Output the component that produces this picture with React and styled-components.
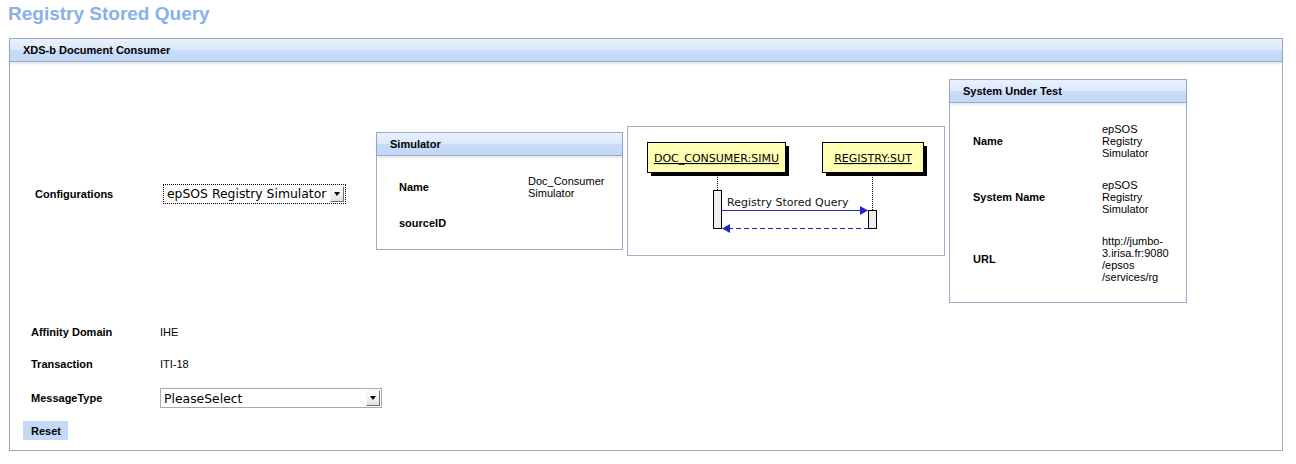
import styled, { createGlobalStyle } from "styled-components";

const GlobalStyle = createGlobalStyle`
  html, body {
    margin: 0;
    padding: 0;
    background: #ffffff;
  }
  body {
    font-family: "Liberation Sans", Arial, Helvetica, sans-serif;
    font-size: 11px;
    color: #000;
  }
`;

const Page = styled.div`
  padding: 0 13px 0 8px;
`;

const Title = styled.h2`
  margin: 3px 0 13px 0;
  font-size: 19px;
  line-height: 22px;
  font-weight: bold;
  color: #88b1ea;
`;

const Panel = styled.div`
  border: 1px solid #9aa9c6;
  background: #fff;
  width: ${(p) => (p.$width ? `${p.$width}px` : "auto")};
  margin-left: ${(p) => (p.$main ? "1px" : "0")};
  box-sizing: border-box;
`;

const PanelHeader = styled.div`
  height: 22px;
  line-height: 22px;
  padding-left: 13px;
  font-weight: bold;
  font-size: 11px;
  border-bottom: 1px solid #9aa9c6;
  background: linear-gradient(
    #e9f1fd 0%,
    #dce8fb 48%,
    #c8dcf8 52%,
    #c2d8f8 100%
  );
  box-shadow: 0 2px 3px rgba(0, 0, 0, 0.1);
  position: relative;
`;

const PanelBody = styled.div`
  padding: ${(p) => p.$pad || "10px 12px"};
`;

const TopRow = styled.div`
  display: grid;
  grid-template-columns: 128px 213px 251px 322px 238px;
  align-items: center;
  margin-left: 12px;
`;

const ConfigCell = styled.div`
  padding-top: 5px;
  font-weight: ${(p) => (p.$bold ? "bold" : "normal")};
`;

const Label = styled.div`
  font-weight: bold;
`;

const FakeSelect = styled.div`
  display: flex;
  align-items: center;
  justify-content: space-between;
  box-sizing: border-box;
  width: ${(p) => p.$width}px;
  height: 20px;
  padding: 0 1px 0 3px;
  border: 1px ${(p) => (p.$focus ? "dotted #000" : "solid #aaaaaa")};
  font-family: "DejaVu Sans", "Liberation Sans", sans-serif;
  font-size: 12.4px;
  background: #fff;
`;

const SelectArrow = styled.span`
  display: flex;
  align-items: center;
  justify-content: center;
  width: 12px;
  height: 14px;
  border: 1px solid;
  border-color: #f4f4f4 #6e6e6e #6e6e6e #f4f4f4;
  background: linear-gradient(#ffffff, #e2e2e2);
  &::after {
    content: "";
    border-left: 3px solid transparent;
    border-right: 3px solid transparent;
    border-top: 4px solid #000;
  }
`;

const InfoTable = styled.div`
  display: grid;
  grid-template-columns: 129px 1fr;
  align-items: center;
`;

const InfoCell = styled.div`
  padding: ${(p) => p.$pad}px 10px;
  line-height: 12px;
  font-weight: ${(p) => (p.$bold ? "bold" : "normal")};
`;

const DiagramBox = styled.div`
  width: 318px;
  height: 130px;
  box-sizing: border-box;
  border: 1px solid #a6b2ca;
  background: #fff;
  svg {
    display: block;
  }
`;

const BottomArea = styled.div`
  margin-top: 13px;
  padding-left: 8px;
`;

const FormRow = styled.div`
  display: grid;
  grid-template-columns: 129px auto;
  align-items: center;
  height: ${(p) => p.$h}px;
`;

const ResetButton = styled.button`
  margin-top: 5px;
  height: 19px;
  width: 45px;
  border: none;
  padding: 0 0 0 8px;
  text-align: left;
  background: #c3d9f7;
  font-family: "Liberation Sans", Arial, sans-serif;
  font-size: 11px;
  font-weight: bold;
  color: #000;
  display: block;
`;

function Lines({ items }) {
  return items.map((l, i) => (
    <span key={i}>
      {l}
      {i < items.length - 1 && <br />}
    </span>
  ));
}

function Select({ value, width, focus }) {
  return (
    <FakeSelect $width={width} $focus={focus}>
      <span>{value}</span>
      <SelectArrow />
    </FakeSelect>
  );
}

function InfoPanel({ title, width, rows, pad, bodyPad }) {
  return (
    <Panel $width={width}>
      <PanelHeader>{title}</PanelHeader>
      <PanelBody $pad={bodyPad}>
        <InfoTable>
          {rows.map((r) => [
            <InfoCell key={r.label + "l"} $bold $pad={pad}>
              {r.label}
            </InfoCell>,
            <InfoCell key={r.label + "v"} $pad={pad}>
              <Lines items={r.value} />
            </InfoCell>,
          ])}
        </InfoTable>
      </PanelBody>
    </Panel>
  );
}

function SequenceDiagram() {
  const blue = "#2323cc";
  const font = "DejaVu Sans, Liberation Sans, sans-serif";
  return (
    <DiagramBox>
      <svg width="316" height="128" viewBox="0 0 316 128">
        {/* participants */}
        <rect x="23" y="19" width="138" height="30" fill="#000" />
        <rect x="19.5" y="15.5" width="138" height="30" fill="#ffffb4" stroke="#000" />
        <text x="88.5" y="35" fontFamily={font} fontSize="11" textAnchor="middle" textDecoration="underline">
          DOC_CONSUMER:SIMU
        </text>

        <rect x="198" y="19" width="101" height="30" fill="#000" />
        <rect x="194.5" y="15.5" width="101" height="30" fill="#ffffb4" stroke="#000" />
        <text x="245" y="35" fontFamily={font} fontSize="11" textAnchor="middle" textDecoration="underline">
          REGISTRY:SUT
        </text>

        {/* lifelines */}
        <line x1="89.5" y1="50" x2="89.5" y2="63" stroke="#000" strokeDasharray="1 1" />
        <line x1="244.5" y1="50" x2="244.5" y2="83" stroke="#000" strokeDasharray="1 1" />

        {/* activations */}
        <rect x="85.5" y="63.5" width="8" height="38" fill="#eeeeee" stroke="#000" />
        <rect x="240.5" y="83.5" width="8" height="18" fill="#eeeeee" stroke="#000" />

        {/* call */}
        <text x="99" y="79" fontFamily={font} fontSize="11" fill="#111">
          Registry Stored Query
        </text>
        <line x1="94" y1="83.5" x2="234" y2="83.5" stroke={blue} strokeWidth="1" />
        <polygon points="240,83.5 232,79 232,88" fill={blue} />

        {/* return */}
        <line x1="100" y1="101.5" x2="240" y2="101.5" stroke={blue} strokeDasharray="5 3" />
        <polygon points="94,101.5 102,97 102,106" fill={blue} />
      </svg>
    </DiagramBox>
  );
}

export default function App() {
  return (
    <Page>
      <GlobalStyle />
      <Title>Registry Stored Query</Title>
      <Panel $main>
        <PanelHeader>XDS-b Document Consumer</PanelHeader>
        <PanelBody $pad="17px 13px 10px 13px">
          <TopRow>
            <ConfigCell $bold>Configurations</ConfigCell>
            <ConfigCell>
              <Select value="epSOS Registry Simulator" width={183} focus />
            </ConfigCell>
            <InfoPanel
              title="Simulator"
              width={247}
              pad={9}
              bodyPad="10px 12px 11px 12px"
              rows={[
                { label: "Name", value: ["Doc_Consumer", "Simulator"] },
                { label: "sourceID", value: [""] },
              ]}
            />
            <SequenceDiagram />
            <InfoPanel
              title="System Under Test"
              width={238}
              pad={10}
              bodyPad="10px 13px 9px 13px"
              rows={[
                { label: "Name", value: ["epSOS", "Registry", "Simulator"] },
                { label: "System Name", value: ["epSOS", "Registry", "Simulator"] },
                {
                  label: "URL",
                  value: ["http://jumbo-", "3.irisa.fr:9080", "/epsos", "/services/rg"],
                },
              ]}
            />
          </TopRow>
          <BottomArea>
            <FormRow $h={32}>
              <Label>Affinity Domain</Label>
              <div>IHE</div>
            </FormRow>
            <FormRow $h={32}>
              <Label>Transaction</Label>
              <div>ITI-18</div>
            </FormRow>
            <FormRow $h={36}>
              <Label>MessageType</Label>
              <Select value="PleaseSelect" width={222} />
            </FormRow>
          </BottomArea>
          <ResetButton>Reset</ResetButton>
        </PanelBody>
      </Panel>
    </Page>
  );
}
